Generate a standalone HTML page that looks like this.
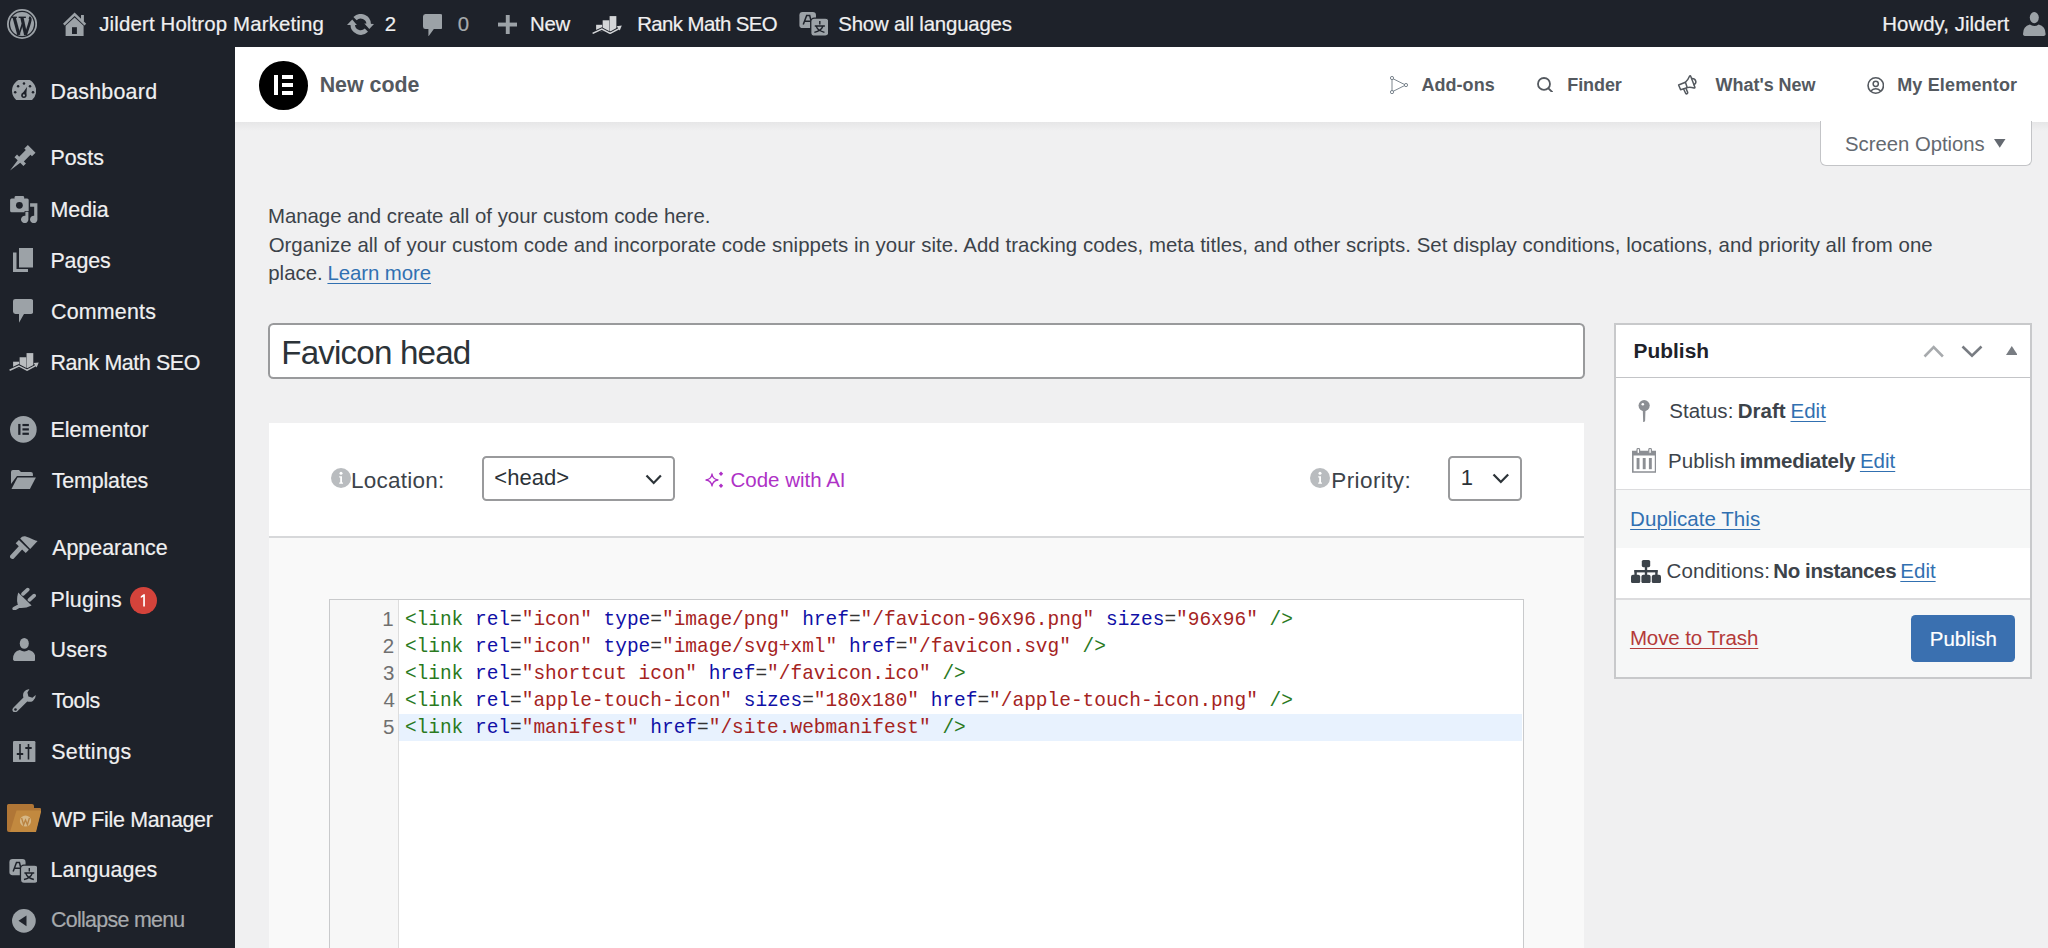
<!DOCTYPE html>
<html><head><meta charset="utf-8"><title>New code</title>
<style>
html,body{margin:0;padding:0;}
body{width:2048px;height:948px;overflow:hidden;position:relative;background:#f0f0f1;font-family:"Liberation Sans",sans-serif;}
.t{position:absolute;white-space:pre;}
.s{-webkit-text-stroke:0.2px currentColor;}
.b{position:absolute;display:block;}
</style></head><body>
<div class="b" style="left:0px;top:0px;width:2048px;height:47px;background:#1e222a"></div>
<div class="b" style="left:0px;top:47px;width:235px;height:901px;background:#1e222a"></div>
<div class="b" style="left:235px;top:47px;width:1813px;height:75px;background:#fff"></div>
<div class="b" style="left:235px;top:122px;width:1813px;height:9px;background:linear-gradient(#e6e6e7,#f0f0f1)"></div>
<svg class="b" style="left:7.2px;top:8.9px;" width="30.1" height="30" viewBox="0 0 30 30" preserveAspectRatio="none"><circle cx="15" cy="15" r="14.1" fill="none" stroke="#9ca2a7" stroke-width="1.8"/><circle cx="15" cy="15" r="11.9" fill="#9ca2a7"/><g stroke="#1e222a" fill="none" stroke-linecap="butt"><path d="M7.2 8.6 L11.8 25.8" stroke-width="3.2"/><path d="M11.8 25.8 L15.4 15" stroke-width="1.6"/><path d="M14.9 8.6 L18.6 25.8" stroke-width="3.2"/><path d="M18.6 25.8 Q22.5 15 23.2 11 Q23.5 9 22 8.4" stroke-width="2.6"/></g><rect x="4.4" y="7.6" width="5.4" height="1.4" fill="#1e222a"/><rect x="11.6" y="7.6" width="7.2" height="1.4" fill="#1e222a"/></svg>
<svg class="b" style="left:62px;top:11px;" width="25" height="26" viewBox="62 11 25 26" preserveAspectRatio="none"><path d="M63 23.8 L74.6 12.4 L86.2 23.8 L84.5 25.5 L74.6 15.9 L64.7 25.5 Z" fill="#9ca2a7"/><rect x="81" y="15" width="2.9" height="6.5" fill="#9ca2a7"/><path d="M65.6 25.8 L74.6 17.6 L83.6 25.8 V36 H65.6 Z" fill="#9ca2a7"/><rect x="72" y="27.2" width="4.9" height="6.8" fill="#1e222a"/></svg>
<div class="t s" style="left:99.28px;top:12.13px;font-size:20.4px;line-height:24px;color:#f0f0f1;font-weight:400;font-family:'Liberation Sans', sans-serif;letter-spacing:0.148px;">Jildert Holtrop Marketing</div>
<svg class="b" style="left:347px;top:13.5px;" width="27" height="21" viewBox="0 0 27 21" preserveAspectRatio="none"><path d="M8.0 4.7 A8 8 0 0 1 21.7 10.4" stroke="#9ca2a7" stroke-width="4.5" fill="none"/><path d="M17.3 9.6 L27 9.9 L22.3 15 Z" fill="#9ca2a7"/><path d="M19.4 16.1 A8 8 0 0 1 5.7 10.4" stroke="#9ca2a7" stroke-width="4.5" fill="none"/><path d="M0 11 L5.2 5.4 L9.9 11 Z" fill="#9ca2a7"/></svg>
<div class="t s" style="left:384.87px;top:11.93px;font-size:20.4px;line-height:24px;color:#f0f0f1;font-weight:400;font-family:'Liberation Sans', sans-serif;">2</div>
<svg class="b" style="left:422.7px;top:13.5px;" width="19.7" height="22.5" viewBox="0 0 20 22.5" preserveAspectRatio="none"><path d="M2.5 0 H17.5 Q20 0 20 2.5 V12.5 Q20 15 17.5 15 H11 L5.5 22.5 V15 H2.5 Q0 15 0 12.5 V2.5 Q0 0 2.5 0 Z" fill="#9ca2a7"/></svg>
<div class="t s" style="left:457.7px;top:11.93px;font-size:20.4px;line-height:24px;color:#a7aaad;font-weight:400;font-family:'Liberation Sans', sans-serif;">0</div>
<svg class="b" style="left:497.5px;top:15px;" width="19.5" height="19" viewBox="0 0 19.5 19" preserveAspectRatio="none"><rect x="7.8" y="0" width="3.9" height="19" fill="#9ca2a7"/><rect x="0" y="7.6" width="19.5" height="3.9" fill="#9ca2a7"/></svg>
<div class="t s" style="left:529.93px;top:11.93px;font-size:20.4px;line-height:24px;color:#f0f0f1;font-weight:400;font-family:'Liberation Sans', sans-serif;letter-spacing:-0.193px;">New</div>
<svg class="b" style="left:592px;top:15.8px;" width="30.2" height="18.2" viewBox="0 0 30 18.2" preserveAspectRatio="none"><rect x="4.1" y="8.8" width="6" height="6.5" fill="#d4d6d8"/><rect x="10.6" y="4.3" width="6.6" height="11" fill="#d4d6d8"/><rect x="17.5" y="0.1" width="6.7" height="15.5" fill="#d4d6d8"/><path d="M0.6 17.4 L9.8 13.1 L18 17.4 L27 12.6" stroke="#1e222a" stroke-width="3.4" fill="none"/><path d="M0.6 17.4 L9.8 13.1 L18 17.4 L27 12.6" stroke="#d4d6d8" stroke-width="1.5" fill="none"/><path d="M24.5 10.2 L29.6 9.6 L27.6 14.6 Z" fill="#d4d6d8"/></svg>
<div class="t s" style="left:637.13px;top:11.93px;font-size:20.4px;line-height:24px;color:#f0f0f1;font-weight:400;font-family:'Liberation Sans', sans-serif;letter-spacing:-0.562px;">Rank Math SEO</div>
<svg class="b" style="left:799px;top:12px;" width="29.3" height="23.6" viewBox="0 0 29 24" preserveAspectRatio="none"><rect x="0.4" y="0" width="16.4" height="16.4" rx="3.2" fill="#9ca2a7"/><path d="M4.2 12.6 L7.6 3.6 H10.6 L12 9.3 M5.8 9.3 H13" stroke="#1e222a" stroke-width="1.5" fill="none"/><rect x="11.6" y="6.2" width="18" height="18.4" rx="3.6" fill="#9ca2a7" stroke="#1e222a" stroke-width="1.3"/><path d="M20.6 9.2 V12.6 M15.6 14.2 H25.6 M17 14.4 Q18.5 19 25.2 20.8 M23.6 14.4 Q22 19 15.2 20.8" stroke="#1e222a" stroke-width="1.4" fill="none"/></svg>
<div class="t s" style="left:838.27px;top:11.93px;font-size:20.4px;line-height:24px;color:#f0f0f1;font-weight:400;font-family:'Liberation Sans', sans-serif;letter-spacing:-0.186px;">Show all languages</div>
<div class="t s" style="left:1882.33px;top:12.13px;font-size:20.4px;line-height:24px;color:#f0f0f1;font-weight:400;font-family:'Liberation Sans', sans-serif;letter-spacing:0.032px;">Howdy, Jildert</div>
<svg class="b" style="left:2023.4px;top:12px;" width="22.6" height="24" viewBox="0 0 23 24" preserveAspectRatio="none"><ellipse cx="11.5" cy="5.6" rx="4.6" ry="5.6" fill="#9ca2a7"/><path d="M0 22 Q0 14 7 12.5 Q11.5 15.5 16 12.5 Q23 14 23 22 Q23 24 20 24 H3 Q0 24 0 22 Z" fill="#9ca2a7"/></svg>
<div class="t s" style="left:50.44px;top:78.98px;font-size:21.4px;line-height:26px;color:#f0f0f1;font-weight:400;font-family:'Liberation Sans', sans-serif;letter-spacing:0.243px;">Dashboard</div>
<div class="t s" style="left:50.44px;top:145.48px;font-size:21.4px;line-height:26px;color:#f0f0f1;font-weight:400;font-family:'Liberation Sans', sans-serif;">Posts</div>
<div class="t s" style="left:50.44px;top:197.28px;font-size:21.4px;line-height:26px;color:#f0f0f1;font-weight:400;font-family:'Liberation Sans', sans-serif;">Media</div>
<div class="t s" style="left:50.44px;top:247.98px;font-size:21.4px;line-height:26px;color:#f0f0f1;font-weight:400;font-family:'Liberation Sans', sans-serif;letter-spacing:-0.087px;">Pages</div>
<div class="t s" style="left:51.11px;top:298.98px;font-size:21.4px;line-height:26px;color:#f0f0f1;font-weight:400;font-family:'Liberation Sans', sans-serif;letter-spacing:0.186px;">Comments</div>
<div class="t s" style="left:50.44px;top:349.58px;font-size:21.4px;line-height:26px;color:#f0f0f1;font-weight:400;font-family:'Liberation Sans', sans-serif;letter-spacing:-0.386px;">Rank Math SEO</div>
<div class="t s" style="left:50.44px;top:416.78px;font-size:21.4px;line-height:26px;color:#f0f0f1;font-weight:400;font-family:'Liberation Sans', sans-serif;letter-spacing:0.072px;">Elementor</div>
<div class="t s" style="left:51.72px;top:468.28px;font-size:21.4px;line-height:26px;color:#f0f0f1;font-weight:400;font-family:'Liberation Sans', sans-serif;letter-spacing:-0.131px;">Templates</div>
<div class="t s" style="left:52.16px;top:535.08px;font-size:21.4px;line-height:26px;color:#f0f0f1;font-weight:400;font-family:'Liberation Sans', sans-serif;letter-spacing:0.020px;">Appearance</div>
<div class="t s" style="left:50.44px;top:586.58px;font-size:21.4px;line-height:26px;color:#f0f0f1;font-weight:400;font-family:'Liberation Sans', sans-serif;letter-spacing:0.190px;">Plugins</div>
<div class="t s" style="left:50.55px;top:637.28px;font-size:21.4px;line-height:26px;color:#f0f0f1;font-weight:400;font-family:'Liberation Sans', sans-serif;letter-spacing:0.185px;">Users</div>
<div class="t s" style="left:51.72px;top:688.08px;font-size:21.4px;line-height:26px;color:#f0f0f1;font-weight:400;font-family:'Liberation Sans', sans-serif;letter-spacing:-0.344px;">Tools</div>
<div class="t s" style="left:51.23px;top:739.08px;font-size:21.4px;line-height:26px;color:#f0f0f1;font-weight:400;font-family:'Liberation Sans', sans-serif;letter-spacing:0.374px;">Settings</div>
<div class="t s" style="left:52.11px;top:806.68px;font-size:21.4px;line-height:26px;color:#f0f0f1;font-weight:400;font-family:'Liberation Sans', sans-serif;letter-spacing:-0.297px;">WP File Manager</div>
<div class="t s" style="left:50.44px;top:857.08px;font-size:21.4px;line-height:26px;color:#f0f0f1;font-weight:400;font-family:'Liberation Sans', sans-serif;letter-spacing:0.102px;">Languages</div>
<div class="t s" style="left:51.11px;top:906.88px;font-size:21.4px;line-height:26px;color:#a7aaad;font-weight:400;font-family:'Liberation Sans', sans-serif;letter-spacing:-0.712px;">Collapse menu</div>
<svg class="b" style="left:129.5px;top:587px;" width="27" height="27.2" viewBox="0 0 27 27.2" preserveAspectRatio="none"><circle cx="13.5" cy="13.6" r="13.5" fill="#d4433b"/><path d="M14.9 7.2 V19.4 H13.2 V9.8 L10.8 11 V9.3 L13.5 7.2 Z" fill="#fff"/></svg>
<svg class="b" style="left:11.7px;top:80.1px;" width="24.2" height="19.9" viewBox="0 0 24.2 19.9" preserveAspectRatio="none"><path d="M4.15 19.9 A12.1 12.1 0 1 1 20.05 19.9 Z" fill="#9ca2a7"/><circle cx="12" cy="3.4" r="1.25" fill="#1e222a"/><circle cx="6.1" cy="6.3" r="1.25" fill="#1e222a"/><circle cx="18" cy="6.3" r="1.25" fill="#1e222a"/><circle cx="3.2" cy="12.3" r="1.25" fill="#1e222a"/><circle cx="21" cy="12.3" r="1.25" fill="#1e222a"/><path d="M15 7 L14.3 14.5 L10.2 13.8 Z" fill="#1e222a"/><circle cx="11.9" cy="15.2" r="2.7" fill="#1e222a"/><circle cx="11.9" cy="15.4" r="1.1" fill="#9ca2a7"/></svg>
<svg class="b" style="left:10.4px;top:145px;" width="26.1" height="25.5" viewBox="0 0 26 25.5" preserveAspectRatio="none"><path d="M0.00 25.50 L10.18 17.86 L13.36 21.05 L15.91 18.50 L13.79 16.38 L20.40 9.77 L21.88 11.25 L25.42 7.72 L17.78 0.08 L14.25 3.62 L15.73 5.10 L9.12 11.71 L7.00 9.59 L4.45 12.14 L7.64 15.32 L0.00 25.50 Z" fill="#9ca2a7"/></svg>
<svg class="b" style="left:9.9px;top:195.7px;" width="27.7" height="27.2" viewBox="0 0 27.7 27.2" preserveAspectRatio="none"><rect x="0.1" y="2.5" width="18.6" height="13.7" rx="1.5" fill="#9ca2a7"/><rect x="4.6" y="0" width="9.5" height="4" rx="1.2" fill="#9ca2a7"/><circle cx="9.4" cy="9.3" r="3.4" fill="#1e222a"/><g fill="#9ca2a7" stroke="#1e222a" stroke-width="1.6" paint-order="stroke"><path d="M24.2 7.3 H27.4 V23.2 A3.7 3.7 0 1 1 24.2 19.8 V10.8 H20.1 V7.3 Z"/><path d="M15.4 15.8 H18.4 V23.2 A3.7 3.7 0 1 1 15.4 19.8 Z"/></g></svg>
<svg class="b" style="left:13px;top:248px;" width="20.2" height="24.2" viewBox="0 0 20.2 24.2" preserveAspectRatio="none"><rect x="6" y="0" width="14.2" height="19.5" fill="#9ca2a7"/><path d="M0 4.5 H3.5 V21 H15 V24.2 H0 Z" fill="#9ca2a7"/></svg>
<svg class="b" style="left:13px;top:299.1px;" width="20.2" height="23.7" viewBox="0 0 20.2 23.7" preserveAspectRatio="none"><path d="M2.5 0 H17.7 Q20.2 0 20.2 2.5 V12.5 Q20.2 15 17.7 15 H11 L6 23.7 V15 H2.5 Q0 15 0 12.5 V2.5 Q0 0 2.5 0 Z" fill="#9ca2a7"/></svg>
<svg class="b" style="left:8.7px;top:353px;" width="30.1" height="18" viewBox="0 0 30 18.2" preserveAspectRatio="none"><rect x="4.1" y="8.8" width="6" height="6.5" fill="#b9bcbf"/><rect x="10.6" y="4.3" width="6.6" height="11" fill="#b9bcbf"/><rect x="17.5" y="0.1" width="6.7" height="15.5" fill="#b9bcbf"/><path d="M0.6 17.4 L9.8 13.1 L18 17.4 L27 12.6" stroke="#1e222a" stroke-width="3.4" fill="none"/><path d="M0.6 17.4 L9.8 13.1 L18 17.4 L27 12.6" stroke="#b9bcbf" stroke-width="1.5" fill="none"/><path d="M24.5 10.2 L29.6 9.6 L27.6 14.6 Z" fill="#b9bcbf"/></svg>
<svg class="b" style="left:10.4px;top:416.2px;" width="26.7" height="26.8" viewBox="0 0 27 27" preserveAspectRatio="none"><circle cx="13.5" cy="13.5" r="13.5" fill="#9ca2a7"/><rect x="8.3" y="8" width="2.3" height="11" fill="#1e222a"/><rect x="12.6" y="8" width="6.5" height="2.2" fill="#1e222a"/><rect x="12.6" y="12.4" width="6.5" height="2.2" fill="#1e222a"/><rect x="12.6" y="16.8" width="6.5" height="2.2" fill="#1e222a"/></svg>
<svg class="b" style="left:11.1px;top:469.6px;" width="24.9" height="19" viewBox="0 0 25 19" preserveAspectRatio="none"><path d="M0 2 Q0 0 2 0 H8 L10 2 H20 Q22 2 22 4 V6 H6 L0 14 Z" fill="#9ca2a7"/><path d="M6.5 7.5 H25 L19 19 H0.5 Z" fill="#9ca2a7"/></svg>
<svg class="b" style="left:10.4px;top:535px;" width="29" height="25" viewBox="10.4 535 29 25" preserveAspectRatio="none"><path d="M20.6 538.4 Q22.5 535.9 25.5 536.3 Q30 537.6 33.5 539.4 Q36.2 540.6 38 541 L30.6 549 Z" fill="#9ca2a7"/><path d="M16.1 543.3 L19.3 540.1 L29.3 549.8 L26.1 553 Z" fill="#9ca2a7"/><path d="M21.3 547.4 L12.8 556.6" stroke="#9ca2a7" stroke-width="4.6" stroke-linecap="round"/></svg>
<svg class="b" style="left:11.6px;top:585.7px;" width="24.4" height="24.8" viewBox="11.6 585.7 24.4 24.8" preserveAspectRatio="none"><path d="M17.8 592.2 L31.2 605.2 Q25 608.3 18.6 607.6 Q15.2 601 17.8 592.2 Z" fill="#9ca2a7"/><path d="M17.6 606.4 L13.9 608.4" stroke="#9ca2a7" stroke-width="3.8" stroke-linecap="round"/><path d="M22.7 593.6 L27.3 589.3 M29.1 599.5 L33.7 595.3" stroke="#9ca2a7" stroke-width="3.7" stroke-linecap="round"/></svg>
<svg class="b" style="left:12.5px;top:638px;" width="22.6" height="23.2" viewBox="0 0 23 24" preserveAspectRatio="none"><ellipse cx="11.5" cy="5.6" rx="4.6" ry="5.6" fill="#9ca2a7"/><path d="M0 22 Q0 14 7 12.5 Q11.5 15.5 16 12.5 Q23 14 23 22 Q23 24 20 24 H3 Q0 24 0 22 Z" fill="#9ca2a7"/></svg>
<svg class="b" style="left:11.8px;top:688.5px;" width="23.9" height="23.9" viewBox="0 0 24 24" preserveAspectRatio="none"><path d="M17.5 0.3 Q14 0 12 3 Q10.5 5.5 11.5 8.5 L1.5 18.5 Q-0.5 20.5 1 22.5 Q3 24.5 5.2 22.5 L15.3 12.5 Q18.5 13.5 21 12 Q24 9.5 23.8 6 L20.5 8.7 L16.5 7.6 L15.5 3.6 Z" fill="#9ca2a7"/><circle cx="3.5" cy="20.6" r="1.3" fill="#1e222a"/></svg>
<svg class="b" style="left:13.3px;top:740.9px;" width="22.4" height="21.4" viewBox="0 0 22.4 21.4" preserveAspectRatio="none"><rect x="0" y="0" width="22.4" height="21.4" rx="1.2" fill="#9ca2a7"/><path d="M7 3 V18.5 M15.5 3 V18.5" stroke="#1e222a" stroke-width="1.6"/><rect x="3.8" y="12" width="6.4" height="2" fill="#1e222a"/><rect x="12.3" y="6" width="6.4" height="2" fill="#1e222a"/></svg>
<svg class="b" style="left:6.5px;top:804.3px;" width="34.4" height="28" viewBox="0 0 34.4 28" preserveAspectRatio="none"><path d="M1.5 0 H25 Q27 0 27 2 V4 H33 Q34.4 4 34 6 L29 26.5 Q28.5 28 27 28 H2 Q0 28 0 26 V1.5 Q0 0 1.5 0 Z" fill="#b07636"/><path d="M9.5 6.5 H34.4 L29 28 H3 Z" fill="#c2893f"/><circle cx="18.5" cy="17" r="5.6" fill="#d6b887"/><path d="M14.6 14 L16.6 20.8 L18.5 16 L20.4 20.8 L22.4 14" stroke="#b98240" stroke-width="1.3" fill="none"/></svg>
<svg class="b" style="left:8.9px;top:859.3px;" width="28.6" height="23.7" viewBox="0 0 29 24" preserveAspectRatio="none"><rect x="0.4" y="0" width="16.4" height="16.4" rx="3.2" fill="#9ca2a7"/><path d="M4.2 12.6 L7.6 3.6 H10.6 L12 9.3 M5.8 9.3 H13" stroke="#1e222a" stroke-width="1.5" fill="none"/><rect x="11.6" y="6.2" width="18" height="18.4" rx="3.6" fill="#9ca2a7" stroke="#1e222a" stroke-width="1.3"/><path d="M20.6 9.2 V12.6 M15.6 14.2 H25.6 M17 14.4 Q18.5 19 25.2 20.8 M23.6 14.4 Q22 19 15.2 20.8" stroke="#1e222a" stroke-width="1.4" fill="none"/></svg>
<svg class="b" style="left:12px;top:909.1px;" width="23.8" height="23.7" viewBox="0 0 23.8 23.7" preserveAspectRatio="none"><circle cx="11.9" cy="11.85" r="11.85" fill="#9ca2a7"/><path d="M6.5 11.85 L14.5 6.5 V17.2 Z" fill="#1e222a"/></svg>
<div class="b" style="left:259.3px;top:61px;width:48.5px;height:48.5px;border-radius:50%;background:#000"></div>
<div class="b" style="left:273.6px;top:75px;width:4.2px;height:19.8px;background:#fff"></div>
<div class="b" style="left:281.7px;top:75px;width:11.8px;height:4px;background:#fff"></div>
<div class="b" style="left:281.7px;top:83px;width:11.8px;height:4px;background:#fff"></div>
<div class="b" style="left:281.7px;top:90.8px;width:11.8px;height:4px;background:#fff"></div>
<div class="t" style="left:319.67px;top:72.48px;font-size:21.4px;line-height:26px;color:#54595f;font-weight:700;font-family:'Liberation Sans', sans-serif;letter-spacing:-0.005px;">New code</div>
<div class="t" style="left:1421.45px;top:74.26px;font-size:18px;line-height:22px;color:#54595f;font-weight:700;font-family:'Liberation Sans', sans-serif;letter-spacing:0.050px;">Add-ons</div>
<div class="t" style="left:1567.3px;top:74.26px;font-size:18px;line-height:22px;color:#54595f;font-weight:700;font-family:'Liberation Sans', sans-serif;letter-spacing:-0.085px;">Finder</div>
<div class="t" style="left:1715.58px;top:74.26px;font-size:18px;line-height:22px;color:#54595f;font-weight:700;font-family:'Liberation Sans', sans-serif;letter-spacing:-0.034px;">What's New</div>
<div class="t" style="left:1897.2px;top:74.26px;font-size:18px;line-height:22px;color:#54595f;font-weight:700;font-family:'Liberation Sans', sans-serif;letter-spacing:0.168px;">My Elementor</div>
<svg class="b" style="left:1390px;top:75.9px;" width="18" height="18.1" viewBox="0 0 18 18" preserveAspectRatio="none"><path d="M2 2.2 L15.6 9 L2 15.8 Z" fill="none" stroke="#6d7882" stroke-width="0.9"/><circle cx="2" cy="2" r="1.6" fill="#fff" stroke="#6d7882" stroke-width="0.9"/><circle cx="16" cy="9" r="1.6" fill="#fff" stroke="#6d7882" stroke-width="0.9"/><circle cx="2" cy="16" r="1.6" fill="#fff" stroke="#6d7882" stroke-width="0.9"/></svg>
<svg class="b" style="left:1536.8px;top:76.5px;" width="16.2" height="15.9" viewBox="0 0 16.2 16" preserveAspectRatio="none"><circle cx="7" cy="7" r="6" fill="none" stroke="#54595f" stroke-width="1.8"/><path d="M11.4 11.4 L15.5 15.4" stroke="#54595f" stroke-width="1.9" stroke-linecap="round"/></svg>
<svg class="b" style="left:1676px;top:73px;" width="23" height="23" viewBox="1676 73 23 23" preserveAspectRatio="none"><g fill="none" stroke="#54595f" stroke-width="1.5" stroke-linejoin="round" stroke-linecap="round"><path d="M1678.6 85 L1685.4 82.2 L1687.2 87.6 L1680.6 89.7 Z"/><path d="M1685.4 82.2 Q1688 80 1689.5 76.2 Q1690.2 75.4 1690.8 76.4 L1694.9 87.2 Q1695 88.2 1694 88 Q1690 86.8 1687.2 87.6"/><path d="M1691.8 78.6 Q1695 78.5 1695.8 81.2 Q1696.3 83.5 1694 84.6"/><path d="M1683.6 89 L1685.6 93.3 Q1686.4 94.3 1687.4 93.5 Q1688 93 1687.6 92.2 L1686 88.4"/></g></svg>
<svg class="b" style="left:1866.5px;top:76.7px;" width="17.5" height="17" viewBox="0 0 17.5 17" preserveAspectRatio="none"><circle cx="8.75" cy="8.5" r="7.7" fill="none" stroke="#54595f" stroke-width="1.6"/><circle cx="8.75" cy="6.8" r="2.6" fill="none" stroke="#54595f" stroke-width="1.5"/><path d="M3.8 14 Q8.75 9.5 13.7 14" fill="none" stroke="#54595f" stroke-width="1.5"/></svg>
<div class="b" style="left:1820px;top:121px;width:209.5px;height:44.3px;background:#fff;border:1.5px solid #c3c4c7;border-top:none;border-radius:0 0 6px 6px"></div>
<div class="t" style="left:1845.08px;top:132.16px;font-size:20.3px;line-height:24px;color:#646970;font-weight:400;font-family:'Liberation Sans', sans-serif;letter-spacing:-0.013px;">Screen Options</div>
<svg class="b" style="left:1994.4px;top:139px;" width="11.5" height="8.8" viewBox="0 0 11.5 8.8" preserveAspectRatio="none"><path d="M0 0 H11.5 L5.75 8.8 Z" fill="#646970"/></svg>
<div class="t" style="left:267.93px;top:204.03px;font-size:20.4px;line-height:24px;color:#3c434a;font-weight:400;font-family:'Liberation Sans', sans-serif;letter-spacing:-0.016px;">Manage and create all of your custom code here.</div>
<div class="t" style="left:268.63px;top:232.73px;font-size:20.4px;line-height:24px;color:#3c434a;font-weight:400;font-family:'Liberation Sans', sans-serif;letter-spacing:0.043px;">Organize all of your custom code and incorporate code snippets in your site. Add tracking codes, meta titles, and other scripts. Set display conditions, locations, and priority all from one</div>
<div class="t" style="left:268.29px;top:261.43px;font-size:20.4px;line-height:24px;color:#3c434a;font-weight:400;font-family:'Liberation Sans', sans-serif;">place.</div>
<div class="t" style="left:327.43px;top:261.43px;font-size:20.4px;line-height:24px;color:#3170b1;font-weight:400;font-family:'Liberation Sans', sans-serif;letter-spacing:-0.071px;text-decoration:underline;text-underline-offset:3px;text-decoration-thickness:1.4px">Learn more</div>
<div class="b" style="left:268px;top:322.5px;width:1316.5px;height:56px;box-sizing:border-box;background:#fff;border:2px solid #999a9c;border-radius:5.5px"></div>
<div class="t" style="left:281.28px;top:332.59px;font-size:33.2px;line-height:40px;color:#2c3338;font-weight:400;font-family:'Liberation Sans', sans-serif;letter-spacing:-0.842px;">Favicon head</div>
<div class="b" style="left:269px;top:423px;width:1314.5px;height:113px;background:#fff"></div>
<div class="b" style="left:269px;top:536px;width:1314.5px;height:1.5px;background:#d7d8da"></div>
<div class="b" style="left:269px;top:537.5px;width:1314.5px;height:410.5px;background:#f9f9f9"></div>
<svg class="b" style="left:330.6px;top:468px;" width="20" height="20" viewBox="0 0 20 20" preserveAspectRatio="none"><circle cx="10" cy="10" r="10" fill="#b9bcbf"/><circle cx="10" cy="5.2" r="1.5" fill="#fff"/><path d="M8.2 8.3 H11 V14.6 H12 V15.8 H8.2 V14.6 H9.2 V9.5 H8.2 Z" fill="#fff"/></svg>
<div class="t" style="left:351.05px;top:466.5px;font-size:22.5px;line-height:27px;color:#3c434a;font-weight:400;font-family:'Liberation Sans', sans-serif;letter-spacing:0.235px;">Location:</div>
<div class="b" style="left:481.5px;top:456px;width:193.5px;height:45px;box-sizing:border-box;background:#fff;border:2px solid #999a9c;border-radius:4.5px"></div>
<div class="t" style="left:494.32px;top:465.37px;font-size:22px;line-height:26px;color:#2c3338;font-weight:400;font-family:'Liberation Sans', sans-serif;letter-spacing:0.044px;">&lt;head&gt;</div>
<svg class="b" style="left:645px;top:473.5px;" width="17.4" height="11.5" viewBox="0 0 17.4 11.5" preserveAspectRatio="none"><path d="M1.5 1.5 L8.7 9 L15.9 1.5" fill="none" stroke="#2c3338" stroke-width="2.2"/></svg>
<svg class="b" style="left:705px;top:471px;" width="20" height="18" viewBox="0 0 20 18" preserveAspectRatio="none"><path d="M7 3 Q7.8 8.2 13 9 Q7.8 9.8 7 15 Q6.2 9.8 1 9 Q6.2 8.2 7 3 Z" fill="none" stroke="#ae31c6" stroke-width="1.3" stroke-linejoin="round"/><path d="M16 0.5 L18.2 2.7 L16 4.9 L13.8 2.7 Z M16 12.5 L18.2 14.7 L16 16.9 L13.8 14.7 Z" fill="#ae31c6"/></svg>
<div class="t" style="left:730.46px;top:466.69px;font-size:20.5px;line-height:25px;color:#ae31c6;font-weight:400;font-family:'Liberation Sans', sans-serif;letter-spacing:0.001px;">Code with AI</div>
<svg class="b" style="left:1310.2px;top:468px;" width="20" height="20" viewBox="0 0 20 20" preserveAspectRatio="none"><circle cx="10" cy="10" r="10" fill="#b9bcbf"/><circle cx="10" cy="5.2" r="1.5" fill="#fff"/><path d="M8.2 8.3 H11 V14.6 H12 V15.8 H8.2 V14.6 H9.2 V9.5 H8.2 Z" fill="#fff"/></svg>
<div class="t" style="left:1331.25px;top:466.9px;font-size:22.5px;line-height:27px;color:#3c434a;font-weight:400;font-family:'Liberation Sans', sans-serif;letter-spacing:0.406px;">Priority:</div>
<div class="b" style="left:1448px;top:456px;width:74px;height:45px;box-sizing:border-box;background:#fff;border:2px solid #999a9c;border-radius:4.5px"></div>
<div class="t" style="left:1460.82px;top:465.37px;font-size:22px;line-height:26px;color:#2c3338;font-weight:400;font-family:'Liberation Sans', sans-serif;">1</div>
<svg class="b" style="left:1492px;top:473.3px;" width="17.7" height="11.5" viewBox="0 0 17.4 11.5" preserveAspectRatio="none"><path d="M1.5 1.5 L8.7 9 L15.9 1.5" fill="none" stroke="#2c3338" stroke-width="2.2"/></svg>
<div class="b" style="left:329px;top:598.5px;width:1194.5px;height:400px;box-sizing:border-box;background:#fff;border:1.5px solid #c9cacc"></div>
<div class="b" style="left:330px;top:600px;width:68px;height:348px;background:#f7f7f7;border-right:1px solid #ddd"></div>
<div class="b" style="left:399px;top:714.2px;width:1123px;height:26.8px;background:#e8f2fe"></div>
<div class="t" style="left:404.90px;top:607.12px;font-size:19.48px;line-height:27px;font-family:'Liberation Mono',monospace"><span style="color:#2a7a1f">&lt;link</span><span style="color:#333"> </span><span style="color:#1010a6">rel</span><span style="color:#333">=</span><span style="color:#a5241f">"icon"</span><span style="color:#333"> </span><span style="color:#1010a6">type</span><span style="color:#333">=</span><span style="color:#a5241f">"image/png"</span><span style="color:#333"> </span><span style="color:#1010a6">href</span><span style="color:#333">=</span><span style="color:#a5241f">"/favicon-96x96.png"</span><span style="color:#333"> </span><span style="color:#1010a6">sizes</span><span style="color:#333">=</span><span style="color:#a5241f">"96x96"</span><span style="color:#333"> </span><span style="color:#2a7a1f">/&gt;</span></div>
<div class="t" style="left:382.14px;top:606.19px;font-size:20.5px;line-height:25px;color:#707070;font-weight:400;font-family:'Liberation Sans', sans-serif;">1</div>
<div class="t" style="left:404.90px;top:634.12px;font-size:19.48px;line-height:27px;font-family:'Liberation Mono',monospace"><span style="color:#2a7a1f">&lt;link</span><span style="color:#333"> </span><span style="color:#1010a6">rel</span><span style="color:#333">=</span><span style="color:#a5241f">"icon"</span><span style="color:#333"> </span><span style="color:#1010a6">type</span><span style="color:#333">=</span><span style="color:#a5241f">"image/svg+xml"</span><span style="color:#333"> </span><span style="color:#1010a6">href</span><span style="color:#333">=</span><span style="color:#a5241f">"/favicon.svg"</span><span style="color:#333"> </span><span style="color:#2a7a1f">/&gt;</span></div>
<div class="t" style="left:382.87px;top:633.19px;font-size:20.5px;line-height:25px;color:#707070;font-weight:400;font-family:'Liberation Sans', sans-serif;">2</div>
<div class="t" style="left:404.90px;top:661.12px;font-size:19.48px;line-height:27px;font-family:'Liberation Mono',monospace"><span style="color:#2a7a1f">&lt;link</span><span style="color:#333"> </span><span style="color:#1010a6">rel</span><span style="color:#333">=</span><span style="color:#a5241f">"shortcut icon"</span><span style="color:#333"> </span><span style="color:#1010a6">href</span><span style="color:#333">=</span><span style="color:#a5241f">"/favicon.ico"</span><span style="color:#333"> </span><span style="color:#2a7a1f">/&gt;</span></div>
<div class="t" style="left:383.12px;top:660.19px;font-size:20.5px;line-height:25px;color:#707070;font-weight:400;font-family:'Liberation Sans', sans-serif;">3</div>
<div class="t" style="left:404.90px;top:688.12px;font-size:19.48px;line-height:27px;font-family:'Liberation Mono',monospace"><span style="color:#2a7a1f">&lt;link</span><span style="color:#333"> </span><span style="color:#1010a6">rel</span><span style="color:#333">=</span><span style="color:#a5241f">"apple-touch-icon"</span><span style="color:#333"> </span><span style="color:#1010a6">sizes</span><span style="color:#333">=</span><span style="color:#a5241f">"180x180"</span><span style="color:#333"> </span><span style="color:#1010a6">href</span><span style="color:#333">=</span><span style="color:#a5241f">"/apple-touch-icon.png"</span><span style="color:#333"> </span><span style="color:#2a7a1f">/&gt;</span></div>
<div class="t" style="left:383.43px;top:687.19px;font-size:20.5px;line-height:25px;color:#707070;font-weight:400;font-family:'Liberation Sans', sans-serif;">4</div>
<div class="t" style="left:404.90px;top:715.12px;font-size:19.48px;line-height:27px;font-family:'Liberation Mono',monospace"><span style="color:#2a7a1f">&lt;link</span><span style="color:#333"> </span><span style="color:#1010a6">rel</span><span style="color:#333">=</span><span style="color:#a5241f">"manifest"</span><span style="color:#333"> </span><span style="color:#1010a6">href</span><span style="color:#333">=</span><span style="color:#a5241f">"/site.webmanifest"</span><span style="color:#333"> </span><span style="color:#2a7a1f">/&gt;</span></div>
<div class="t" style="left:383.08px;top:714.19px;font-size:20.5px;line-height:25px;color:#707070;font-weight:400;font-family:'Liberation Sans', sans-serif;">5</div>
<div class="b" style="left:1614px;top:322.5px;width:418px;height:356.5px;box-sizing:border-box;background:#fff;border:2px solid #c8c9cb"></div>
<div class="b" style="left:1616px;top:376.8px;width:413.5px;height:1.5px;background:#c3c4c7"></div>
<div class="t" style="left:1633.5px;top:338.45px;font-size:20.9px;line-height:25px;color:#1e222a;font-weight:700;font-family:'Liberation Sans', sans-serif;letter-spacing:0.020px;">Publish</div>
<svg class="b" style="left:1923px;top:345px;" width="21.4" height="13" viewBox="0 0 21.4 13" preserveAspectRatio="none"><path d="M1.5 11.5 L10.7 2.2 L19.9 11.5" fill="none" stroke="#a7aaad" stroke-width="2.6"/></svg>
<svg class="b" style="left:1961px;top:345px;" width="22" height="13" viewBox="0 0 22 13" preserveAspectRatio="none"><path d="M1.5 1.5 L11 10.8 L20.5 1.5" fill="none" stroke="#787c82" stroke-width="2.6"/></svg>
<svg class="b" style="left:2005.6px;top:345.8px;" width="11.6" height="8.9" viewBox="0 0 11.6 8.9" preserveAspectRatio="none"><path d="M5.8 0 L11.6 8.9 H0 Z" fill="#787c82"/></svg>
<svg class="b" style="left:1638px;top:399.7px;" width="12.3" height="22.8" viewBox="0 0 12.3 22.8" preserveAspectRatio="none"><circle cx="6.15" cy="5.6" r="5.6" fill="#8c8f94"/><circle cx="4.8" cy="4.2" r="1.3" fill="#fff"/><path d="M4.8 9.5 H7.5 L7.1 21 L5.2 22.8 Z" fill="#8c8f94"/></svg>
<div class="t" style="left:1669.17px;top:397.89px;font-size:20.5px;line-height:25px;color:#3c434a;font-weight:400;font-family:'Liberation Sans', sans-serif;letter-spacing:0.065px;">Status:</div>
<div class="t" style="left:1737.73px;top:397.89px;font-size:20.5px;line-height:25px;color:#3c434a;font-weight:700;font-family:'Liberation Sans', sans-serif;letter-spacing:-0.004px;">Draft</div>
<div class="t" style="left:1790.52px;top:397.89px;font-size:20.5px;line-height:25px;color:#3170b1;font-weight:400;font-family:'Liberation Sans', sans-serif;text-decoration:underline;text-underline-offset:2.5px;text-decoration-thickness:1.4px">Edit</div>
<svg class="b" style="left:1631.9px;top:447.9px;" width="24.4" height="24.8" viewBox="0 0 24.4 24.8" preserveAspectRatio="none"><path d="M0.8 3.5 H23.6 V24 H0.8 Z" fill="none" stroke="#8c8f94" stroke-width="1.6"/><rect x="0.8" y="3.5" width="22.8" height="4" fill="#8c8f94"/><rect x="5" y="0.5" width="2.6" height="5" rx="1.2" fill="#fff" stroke="#8c8f94" stroke-width="1.2"/><rect x="16.8" y="0.5" width="2.6" height="5" rx="1.2" fill="#fff" stroke="#8c8f94" stroke-width="1.2"/><rect x="4.6" y="10" width="2.9" height="11.2" fill="#8c8f94"/><rect x="10.75" y="10" width="2.9" height="11.2" fill="#8c8f94"/><rect x="16.9" y="10" width="2.9" height="11.2" fill="#8c8f94"/></svg>
<div class="t" style="left:1668.12px;top:448.39px;font-size:20.5px;line-height:25px;color:#3c434a;font-weight:400;font-family:'Liberation Sans', sans-serif;letter-spacing:0.046px;">Publish</div>
<div class="t" style="left:1739.67px;top:448.39px;font-size:20.5px;line-height:25px;color:#3c434a;font-weight:700;font-family:'Liberation Sans', sans-serif;letter-spacing:-0.265px;">immediately</div>
<div class="t" style="left:1859.92px;top:448.39px;font-size:20.5px;line-height:25px;color:#3170b1;font-weight:400;font-family:'Liberation Sans', sans-serif;text-decoration:underline;text-underline-offset:2.5px;text-decoration-thickness:1.4px">Edit</div>
<div class="b" style="left:1616px;top:489px;width:413.5px;height:1.3px;background:#dcdcde"></div>
<div class="b" style="left:1616px;top:490.3px;width:413.5px;height:57.7px;background:#f6f7f7"></div>
<div class="t" style="left:1630.12px;top:506.39px;font-size:20.5px;line-height:25px;color:#3170b1;font-weight:400;font-family:'Liberation Sans', sans-serif;letter-spacing:0.041px;text-decoration:underline;text-underline-offset:2.5px;text-decoration-thickness:1.4px">Duplicate This</div>
<svg class="b" style="left:1630.6px;top:560px;" width="30" height="23.3" viewBox="0 0 30 23.3" preserveAspectRatio="none"><rect x="10.8" y="0" width="8.4" height="7.2" rx="1.6" fill="#3c434a"/><rect x="13.8" y="6" width="2.4" height="10" fill="#3c434a"/><rect x="3.4" y="10" width="23.2" height="2.4" fill="#3c434a"/><rect x="3.4" y="10" width="2.4" height="6" fill="#3c434a"/><rect x="24.2" y="10" width="2.4" height="6" fill="#3c434a"/><rect x="0" y="14.8" width="9.2" height="8.5" rx="2" fill="#3c434a"/><rect x="10.4" y="14.8" width="9.2" height="8.5" rx="2" fill="#3c434a"/><rect x="20.8" y="14.8" width="9.2" height="8.5" rx="2" fill="#3c434a"/></svg>
<div class="t" style="left:1666.56px;top:558.39px;font-size:20.5px;line-height:25px;color:#3c434a;font-weight:400;font-family:'Liberation Sans', sans-serif;letter-spacing:0.075px;">Conditions:</div>
<div class="t" style="left:1773.23px;top:558.39px;font-size:20.5px;line-height:25px;color:#3c434a;font-weight:700;font-family:'Liberation Sans', sans-serif;letter-spacing:-0.389px;">No instances</div>
<div class="t" style="left:1900.32px;top:558.39px;font-size:20.5px;line-height:25px;color:#3170b1;font-weight:400;font-family:'Liberation Sans', sans-serif;text-decoration:underline;text-underline-offset:2.5px;text-decoration-thickness:1.4px">Edit</div>
<div class="b" style="left:1616px;top:598.3px;width:413.5px;height:1.3px;background:#dcdcde"></div>
<div class="b" style="left:1616px;top:599.6px;width:414px;height:77.4px;background:#f6f7f7"></div>
<div class="t" style="left:1629.92px;top:624.89px;font-size:20.5px;line-height:25px;color:#b43a3a;font-weight:400;font-family:'Liberation Sans', sans-serif;letter-spacing:-0.117px;text-decoration:underline;text-underline-offset:2.5px;text-decoration-thickness:1.4px">Move to Trash</div>
<div class="b" style="left:1911.1px;top:615.2px;width:103.7px;height:47.1px;border-radius:4.5px;background:#3a70b0"></div>
<div class="t s" style="left:1929.72px;top:626.39px;font-size:20.5px;line-height:25px;color:#fff;font-weight:400;font-family:'Liberation Sans', sans-serif;letter-spacing:-0.004px;">Publish</div>
</body></html>
